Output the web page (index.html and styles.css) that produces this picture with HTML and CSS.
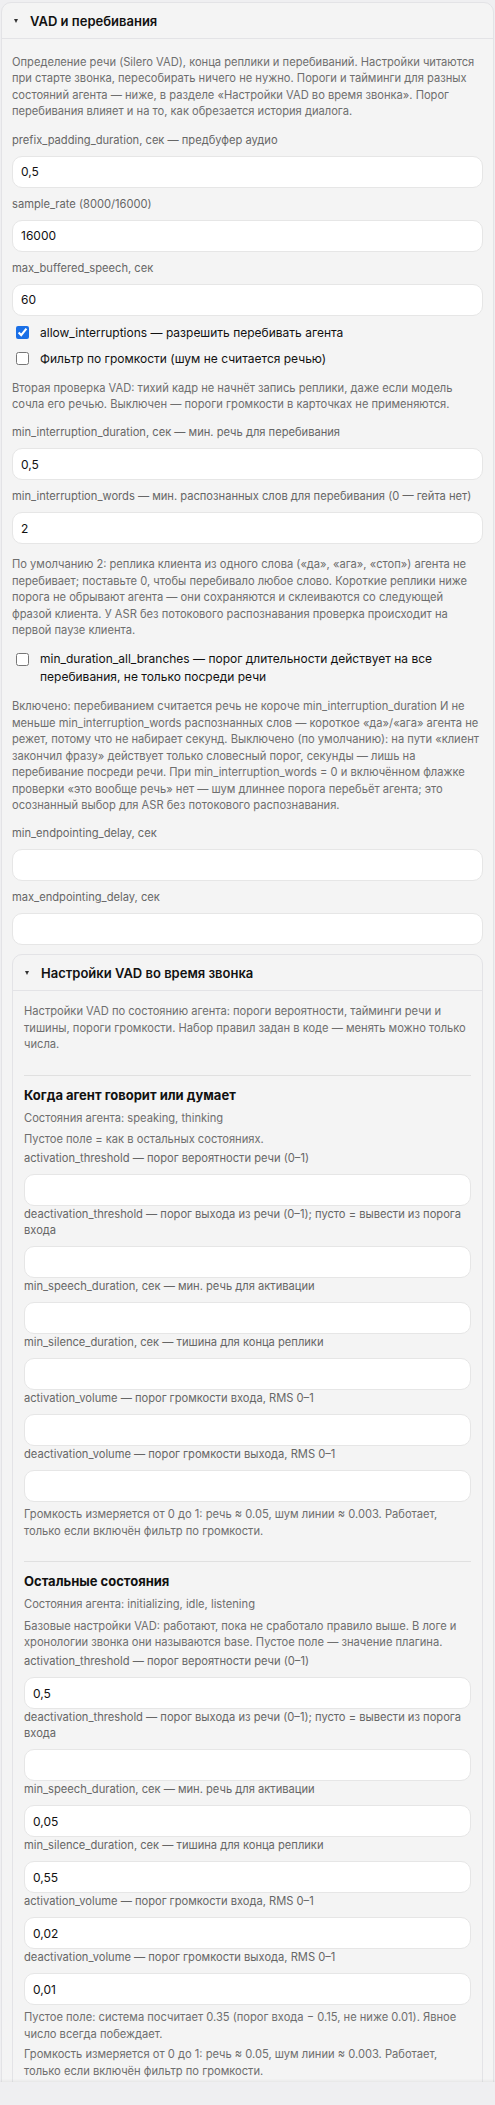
FILE: index.html
```html
<!DOCTYPE html>
<html lang="ru">
<head>
<meta charset="utf-8">
<title>VAD и перебивания</title>
<link rel="stylesheet" href="styles.css">
</head>
<body>
<details class="panel" open>
  <summary class="panel-head"><span class="caret"></span><span>VAD и перебивания</span></summary>
  <div class="panel-body">
    <p class="hint">Определение речи (Silero VAD), конца реплики и перебиваний. Настройки читаются при старте звонка, пересобирать ничего не нужно. Пороги и тайминги для разных состояний агента — ниже, в разделе «Настройки VAD во время звонка». Порог перебивания влияет и на то, как обрезается история диалога.</p>
    <div class="field"><label class="label">prefix_padding_duration, сек — предбуфер аудио</label><input class="input" type="text" value="0,5"></div>
    <div class="field"><label class="label">sample_rate (8000/16000)</label><input class="input" type="text" value="16000"></div>
    <div class="field"><label class="label">max_buffered_speech, сек</label><input class="input" type="text" value="60"></div>
    <label class="check"><input type="checkbox" checked><span>allow_interruptions — разрешить перебивать агента</span></label>
    <label class="check"><input type="checkbox"><span>Фильтр по громкости (шум не считается речью)</span></label>
    <p class="hint">Вторая проверка VAD: тихий кадр не начнёт запись реплики, даже если модель сочла его речью. Выключен — пороги громкости в карточках не применяются.</p>
    <div class="field"><label class="label">min_interruption_duration, сек — мин. речь для перебивания</label><input class="input" type="text" value="0,5"></div>
    <div class="field"><label class="label">min_interruption_words — мин. распознанных слов для перебивания (0 — гейта нет)</label><input class="input" type="text" value="2"></div>
    <p class="hint">По умолчанию 2: реплика клиента из одного слова («да», «ага», «стоп») агента не перебивает; поставьте 0, чтобы перебивало любое слово. Короткие реплики ниже порога не обрывают агента — они сохраняются и склеиваются со следующей фразой клиента. У ASR без потокового распознавания проверка происходит на первой паузе клиента.</p>
    <label class="check"><input type="checkbox"><span>min_duration_all_branches — порог длительности действует на все перебивания, не только посреди речи</span></label>
    <p class="hint">Включено: перебиванием считается речь не короче min_interruption_duration И не меньше min_interruption_words распознанных слов — короткое «да»/«ага» агента не режет, потому что не набирает секунд. Выключено (по умолчанию): на пути «клиент закончил фразу» действует только словесный порог, секунды — лишь на перебивание посреди речи. При min_interruption_words = 0 и включённом флажке проверки «это вообще речь» нет — шум длиннее порога перебьёт агента; это осознанный выбор для ASR без потокового распознавания.</p>
    <div class="field"><label class="label">min_endpointing_delay, сек</label><input class="input" type="text" value=""></div>
    <div class="field"><label class="label">max_endpointing_delay, сек</label><input class="input" type="text" value=""></div>

    <details class="panel inner" open>
      <summary class="panel-head"><span class="caret"></span><span>Настройки VAD во время звонка</span></summary>
      <div class="inner-body">
        <p class="intro">Настройки VAD по состоянию агента: пороги вероятности, тайминги речи и тишины, пороги громкости. Набор правил задан в коде — менять можно только числа.</p>

        <section class="group">
          <h3 class="group-title">Когда агент говорит или думает</h3>
          <p class="meta">Состояния агента: speaking, thinking</p>
          <p class="meta">Пустое поле = как в остальных состояниях.</p>
          <div class="fields">
            <div class="field tight"><label class="label">activation_threshold — порог вероятности речи (0–1)</label><input class="input" type="text" value=""></div>
            <div class="field tight"><label class="label">deactivation_threshold — порог выхода из речи (0–1); пусто = вывести из порога входа</label><input class="input" type="text" value=""></div>
            <div class="field tight"><label class="label">min_speech_duration, сек — мин. речь для активации</label><input class="input" type="text" value=""></div>
            <div class="field tight"><label class="label">min_silence_duration, сек — тишина для конца реплики</label><input class="input" type="text" value=""></div>
            <div class="field tight"><label class="label">activation_volume — порог громкости входа, RMS 0–1</label><input class="input" type="text" value=""></div>
            <div class="field tight"><label class="label">deactivation_volume — порог громкости выхода, RMS 0–1</label><input class="input" type="text" value=""></div>
          </div>
          <p class="note">Громкость измеряется от 0 до 1: речь ≈ 0.05, шум линии ≈ 0.003. Работает, только если включён фильтр по громкости.</p>
        </section>

        <section class="group">
          <h3 class="group-title">Остальные состояния</h3>
          <p class="meta">Состояния агента: initializing, idle, listening</p>
          <p class="meta">Базовые настройки VAD: работают, пока не сработало правило выше. В логе и хронологии звонка они называются base. Пустое поле — значение плагина.</p>
          <div class="fields">
            <div class="field tight"><label class="label">activation_threshold — порог вероятности речи (0–1)</label><input class="input" type="text" value="0,5"></div>
            <div class="field tight"><label class="label">deactivation_threshold — порог выхода из речи (0–1); пусто = вывести из порога входа</label><input class="input" type="text" value=""></div>
            <div class="field tight"><label class="label">min_speech_duration, сек — мин. речь для активации</label><input class="input" type="text" value="0,05"></div>
            <div class="field tight"><label class="label">min_silence_duration, сек — тишина для конца реплики</label><input class="input" type="text" value="0,55"></div>
            <div class="field tight"><label class="label">activation_volume — порог громкости входа, RMS 0–1</label><input class="input" type="text" value="0,02"></div>
            <div class="field tight"><label class="label">deactivation_volume — порог громкости выхода, RMS 0–1</label><input class="input" type="text" value="0,01"></div>
          </div>
          <p class="note">Пустое поле: система посчитает 0.35 (порог входа − 0.15, не ниже 0.01). Явное число всегда побеждает.</p>
          <p class="note">Громкость измеряется от 0 до 1: речь ≈ 0.05, шум линии ≈ 0.003. Работает, только если включён фильтр по громкости.</p>
        </section>
      </div>
    </details>
  </div>
</details>
<div class="footer-bar"></div>
</body>
</html>
```
FILE: styles.css
```css
html, body {
  background: #efeff1;
}
body {
  margin: 0;
  padding: 2px 1px 60px;
  font-family: Inter, "Noto Sans", "Liberation Sans", sans-serif;
  color: #111;
}
p { margin: 0; }

.panel {
  background: #f4f4f4;
  border: 1px solid #e3e3e6;
  border-radius: 10px;
}
.panel-head {
  list-style: none;
  display: flex;
  align-items: center;
  gap: 12px;
  padding: 9px 12px 8px 12px;
  border-bottom: 1px solid #e3e3e6;
  font-size: 13px;
  font-weight: 600;
  line-height: 18px;
  color: #111;
  cursor: pointer;
}
.panel-head::-webkit-details-marker { display: none; }
.caret {
  width: 0;
  height: 0;
  border-left: 2.5px solid transparent;
  border-right: 2.5px solid transparent;
  border-top: 4px solid #333;
  flex: none;
}

.panel-body {
  display: flex;
  flex-direction: column;
  gap: 8px;
  padding: 11px 10px 12px;
}

.hint {
  margin: 4px 0;
  font-size: 11.15px;
  line-height: 16.4px;
  color: #6e6e6e;
}

.label {
  display: block;
  font-size: 11.15px;
  line-height: 16px;
  color: #666;
  margin-bottom: 8px;
}
.input {
  display: block;
  width: 100%;
  box-sizing: border-box;
  height: 32px;
  margin: 0;
  padding: 0 8px;
  border: 1px solid #e6e6e6;
  border-radius: 10px;
  background: #fff;
  font-family: Inter, "Noto Sans", sans-serif;
  font-size: 12px;
  color: #111;
  outline: none;
}

.check {
  display: flex;
  align-items: flex-start;
  gap: 11px;
  font-size: 12px;
  line-height: 18px;
  color: #111;
}
.check input {
  margin: 2.5px 0 0 4px;
  width: 13px;
  height: 13px;
  flex: none;
  accent-color: #1a6fe6;
}

.inner {
  margin-top: 1px;
}
.inner-body {
  padding: 12px 11px;
}
.intro {
  font-size: 11.15px;
  line-height: 16.4px;
  color: #6e6e6e;
}
.group {
  margin-top: 22px;
  border-top: 1px solid #e0e0e0;
  padding-top: 9px;
}
.group-title {
  margin: 0;
  font-size: 13px;
  font-weight: 700;
  line-height: 20px;
  color: #111;
}
.meta {
  margin-top: 5px;
  font-size: 11.15px;
  line-height: 16.4px;
  color: #6e6e6e;
}
.fields {
  margin-top: 3px;
}
.note {
  margin-top: 4px;
  font-size: 11.15px;
  line-height: 16.4px;
  color: #6e6e6e;
}

.footer-bar {
  position: fixed;
  left: 0;
  right: 0;
  bottom: 0;
  height: 23px;
  background: #efeff1;
  box-shadow: 0 -1px 3px rgba(0, 0, 0, 0.07);
}
```
